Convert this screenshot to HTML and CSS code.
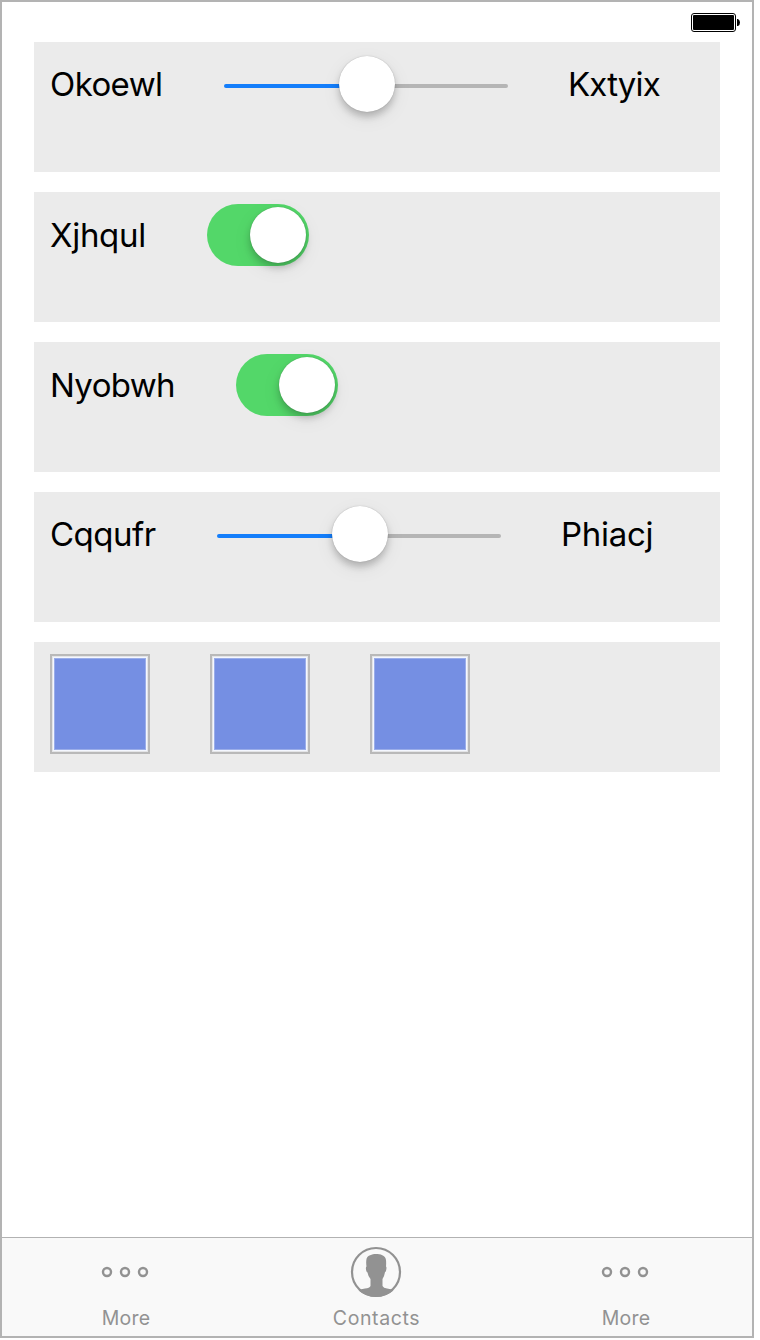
FILE: index.html
```html
<!DOCTYPE html>
<html lang="en">
<head>
<meta charset="utf-8">
<title>Controls</title>
<link rel="stylesheet" href="styles.css">
</head>
<body>
<div class="phone">
  <header class="status">
    <svg class="battery" width="49" height="19" viewBox="0 0 49 19">
      <rect x=".5" y=".5" width="44" height="18" rx="2.5" fill="#fff" stroke="#000"/>
      <rect x="2" y="2" width="41" height="15" rx="1" fill="#000"/>
      <path d="M46 6h1q2 1 2 3.5T47 13h-1z" fill="#000"/>
    </svg>
  </header>
  <main class="rows">
    <section class="row">
      <span class="label okoewl">Okoewl</span>
      <div class="slider"><i class="fill"></i><i class="knob"></i><i class="rest"></i></div>
      <span class="label kxtyix">Kxtyix</span>
    </section>
    <section class="row">
      <span class="label lower xjhqul">Xjhqul</span>
      <div class="switch"><i class="knob"></i></div>
    </section>
    <section class="row">
      <span class="label lower nyobwh">Nyobwh</span>
      <div class="switch"><i class="knob"></i></div>
    </section>
    <section class="row">
      <span class="label cqqufr">Cqqufr</span>
      <div class="slider"><i class="fill"></i><i class="knob"></i><i class="rest"></i></div>
      <span class="label phiacj">Phiacj</span>
    </section>
    <section class="row">
      <div class="tile"></div>
      <div class="tile"></div>
      <div class="tile"></div>
    </section>
  </main>
  <nav class="tabs">
    <div class="tab">
      <svg class="icon" width="52" height="52" viewBox="0 0 52 52" fill="none" stroke="#929292" stroke-width="2.4"><circle cx="7" cy="26" r="4"/><circle cx="25" cy="26" r="4"/><circle cx="43" cy="26" r="4"/></svg>
      <span class="more">More</span>
    </div>
    <div class="tab">
      <svg class="icon" width="52" height="52" viewBox="1 0 52 52">
        <circle cx="27" cy="26" r="24" fill="none" stroke="#929292" stroke-width="2.2"/>
        <path d="M27 8C31 8 36.500 9 37 14Q37.300 17 37 20.500Q37.800 21 37.300 23.500Q37 26 36 26.200Q35.400 30 33.500 33V40Q34.500 42 38 42.500Q42.500 43 44.500 44.500Q37 51 27 51T9.500 44.500Q12 43 16 42.500Q20.500 42 21.500 40V33Q19 30 18.500 26.500Q17.300 26 17 23.500Q16.600 21 17.500 20.500Q16.800 16 17.600 12.500C18.500 9.500 23 8 27 8Z" fill="#929292"/>
      </svg>
      <span class="contacts">Contacts</span>
    </div>
    <div class="tab">
      <svg class="icon" width="52" height="52" viewBox="0 0 52 52" fill="none" stroke="#929292" stroke-width="2.4"><circle cx="7" cy="26" r="4"/><circle cx="25" cy="26" r="4"/><circle cx="43" cy="26" r="4"/></svg>
      <span class="more">More</span>
    </div>
  </nav>
</div>
</body>
</html>
```
FILE: styles.css
```css
* { box-sizing: border-box; }
body { margin: 0; background: #fff; font-family: Inter, "Liberation Sans", sans-serif; color: #000; }
.phone { width: 754px; height: 1338px; border: 2px solid #b3b3b3; display: flex; flex-direction: column; background: #fff; }
.status { height: 40px; padding: 11px 12px 0 0; display: flex; justify-content: flex-end; flex: none; }
.battery { display: block; }
.rows { flex: 1; padding: 0 32px; display: flex; flex-direction: column; gap: 20px; }
.row { height: 130px; background: #ebebeb; padding: 12px 16px; display: flex; align-items: flex-start; gap: 60px; }
.label { font-size: 33px; line-height: 40px; margin-top: 10px; white-space: nowrap; flex: none; }
.lower { margin-top: 11px; }
.okoewl { width: 114px; letter-spacing: -0.6px; }
.kxtyix { width: 94px; letter-spacing: -0.8px; }
.xjhqul { width: 97px; letter-spacing: -0.3px; }
.nyobwh { width: 126px; letter-spacing: -0.65px; }
.cqqufr { width: 107px; letter-spacing: -0.5px; }
.phiacj { width: 94px; letter-spacing: -0.3px; }
.slider { width: 284px; height: 60px; display: flex; align-items: center; flex: none; }
.fill, .rest { height: 4px; margin-top: 4px; }
.fill { width: 119px; background: #147efb; border-radius: 2px 0 0 2px; margin-right: -4px; }
.rest { flex: 1; background: #b5b5b5; border-radius: 0 2px 2px 0; margin-left: -4px; }
.knob { width: 56px; height: 56px; border-radius: 50%; background: #fff; flex: none; position: relative; box-shadow: 0 0 1px rgba(0,0,0,.3), 0 5px 7px rgba(0,0,0,.2), 0 6px 20px rgba(0,0,0,.07); }
.switch { width: 102px; height: 62px; border-radius: 31px; background: #53d769; display: flex; align-items: center; justify-content: flex-end; padding-right: 3px; flex: none; }
.tile { width: 100px; height: 100px; flex: none; border: 2px solid #b9b9b9; background: #758fe3; box-shadow: inset 0 0 0 1px #e4e5e7, inset 0 0 0 2px #f4f7ff, inset 0 0 0 3px #9aade9; }
.tabs { height: 99px; border-top: 1px solid #b2b2b2; background: #f9f9f9; display: flex; flex: none; }
.tab { width: 250px; flex: none; display: flex; flex-direction: column; align-items: center; padding: 8px 2px 0 0; color: #929292; font-size: 19.5px; line-height: 24px; }
.icon { display: block; }
.tab span { margin-top: 8px; }
.more { letter-spacing: .25px; }
.contacts { letter-spacing: .6px; padding-left: 1px; }
```
